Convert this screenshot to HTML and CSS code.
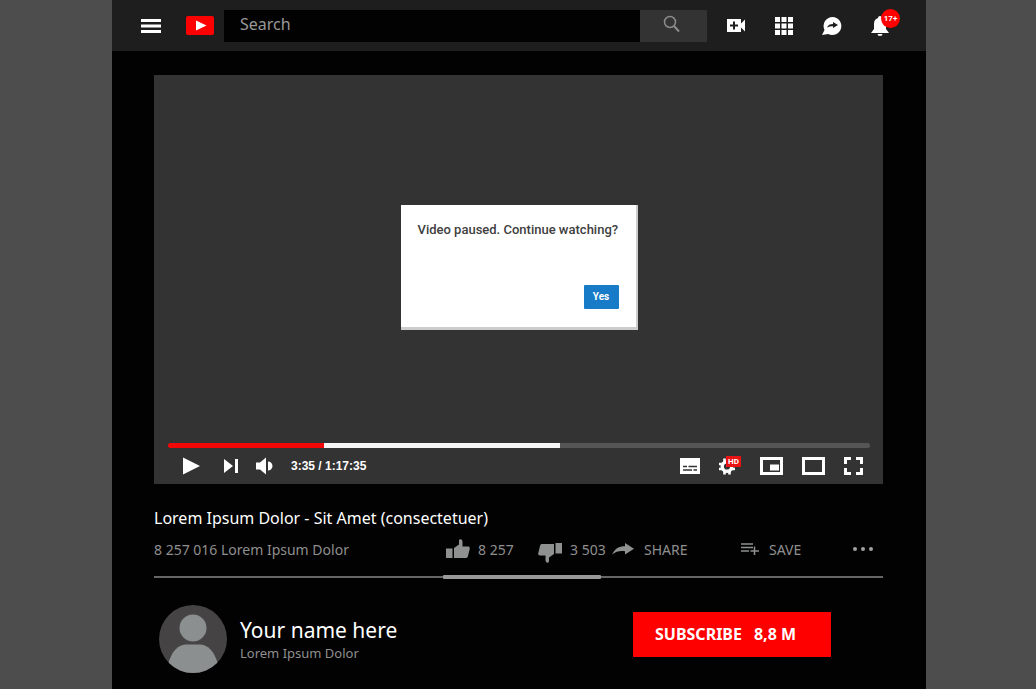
FILE: index.html
```html
<!DOCTYPE html>
<html lang="en">
<head>
  <meta charset="UTF-8">
  <meta name="viewport" content="width=device-width, initial-scale=1.0">
  <title>Lorem Ipsum Dolor</title>
  <link rel="stylesheet" href="styles.css">
</head>
<body>

<div class="page">
  <header class="topbar">
    <button class="icon-btn menu-btn" aria-label="Menu">
      <svg width="20" height="14" viewBox="0 0 20 14" fill="#fff"><path d="M0 0h20v3H0zM0 5.500h20v3H0zM0 11h20v3H0z"/></svg>
    </button>
    <a href="#" class="logo" aria-label="Home">
      <svg width="28" height="19" viewBox="0 0 28 19"><rect width="28" height="19" rx="2" fill="#f00"/><path d="M10 4.500v10l10.500-5z" fill="#fff"/></svg>
    </a>
    <form class="search">
      <input type="text" class="search-input" placeholder="Search" aria-label="Search">
      <button type="submit" class="search-btn" aria-label="Submit search">
        <svg width="18" height="18" viewBox="0 0 18 18" fill="none" stroke="#8c8c8c"><circle cx="7" cy="7" r="5.500" stroke-width="1.500"/><path d="M11 11l5 5.500" stroke-width="2"/></svg>
      </button>
    </form>
    <nav class="top-icons">
      <button class="icon-btn" aria-label="Create">
        <svg width="20" height="16" viewBox="0 0 20 16"><path d="M1 1h14v4.500l4-4v12l-4-4V14H1z" fill="#fff"/><path d="M8 3.500v8M4 7.500h8" stroke="#1e1e1e" stroke-width="2"/></svg>
      </button>
      <button class="icon-btn" aria-label="Apps">
        <svg width="18" height="18" viewBox="0 0 18 18" fill="#fff"><path d="M0 0h5v5H0zM6.500 0h5v5h-5zM13 0h5v5h-5zM0 6.500h5v5H0zM6.500 6.500h5v5h-5zM13 6.500h5v5h-5zM0 13h5v5H0zM6.500 13h5v5h-5zM13 13h5v5h-5z"/></svg>
      </button>
      <button class="icon-btn" aria-label="Messages">
        <svg width="20" height="20" viewBox="0 0 20 20"><path d="M10.500 1a9 9 0 1 1-4.300 17L0 19l2.500-5A9 9 0 0 1 10.500 1z" fill="#fff"/><path d="M5 11.500c1-2.500 3-3.500 6-3.500V6l5 3-5 3v-1.800c-2 0-4 .2-6 1.300z" fill="#1e1e1e"/></svg>
      </button>
      <button class="icon-btn" aria-label="Notifications">
        <svg width="18" height="20" viewBox="0 0 18 20" fill="#fff"><path d="M9 0a2 2 0 0 1 2 2c3 1 4 3 4 6v5l3 4H0l3-4V8c0-3 1-5 4-6a2 2 0 0 1 2-2zM6.500 18h5a2.500 2 0 0 1-5 0z"/></svg>
        <span class="badge">17+</span>
      </button>
    </nav>
  </header>

  <main class="content">
    <section class="player">
      <div class="screen">
        <div class="dialog" role="dialog" aria-labelledby="dialog-text">
          <p id="dialog-text">Video paused. Continue watching?</p>
          <button class="yes-btn">Yes</button>
        </div>
      </div>
      <input type="range" class="seek" min="0" max="4655" value="215" aria-label="Seek" style="--played: 22.2%; --loaded: 55.8%">
      <div class="controls">
        <div class="controls-left">
          <button class="icon-btn" aria-label="Play">
            <svg width="17" height="18" viewBox="0 0 17 18" fill="#fff"><path d="M0 0.500v17L17 9z"/></svg>
          </button>
          <button class="icon-btn next-btn" aria-label="Next">
            <svg width="14" height="14" viewBox="0 0 14 14" fill="#fff"><path d="M0 0v14l9-7zM11 0h3v14h-3z"/></svg>
          </button>
          <button class="icon-btn" aria-label="Mute">
            <svg width="17" height="18" viewBox="0 0 17 18" fill="#fff"><path d="M0 5.500h4L10 0.500v17L4 12.500H0zM12 4.500c2.500 0 4.500 2 4.500 4.500s-2 4.500-4.500 4.500z"/></svg>
          </button>
          <span class="time">3:35 / 1:17:35</span>
        </div>
        <div class="controls-right">
          <button class="icon-btn" aria-label="Subtitles">
            <svg width="20" height="16" viewBox="0 0 20 16"><path d="M0 0h20v16H0z" fill="#fff"/><path d="M3 8.500h4M8.500 8.500h8.500M3 12h9M13.500 12h3.500" stroke="#333" stroke-width="1.500"/></svg>
          </button>
          <button class="icon-btn gear-btn" aria-label="Settings">
            <svg width="16" height="17" viewBox="0 0 16 17"><circle cx="8" cy="8.500" r="4.800" fill="none" stroke="#fff" stroke-width="3.400"/><path d="M5.500 0.500v4M10.500 0.500v4M5.500 12.500v4M10.500 12.500v4M0 6h4M0 11h4M12 6h4M12 11h4" stroke="#fff" stroke-width="2.600"/></svg>
            <span class="hd">HD</span>
          </button>
          <button class="icon-btn" aria-label="Mini player">
            <svg width="23" height="18" viewBox="0 0 23 18"><path d="M1.500 1.500h20v15h-20z" fill="none" stroke="#fff" stroke-width="3"/><path d="M10 7.500h9v6h-9z" fill="#fff"/></svg>
          </button>
          <button class="icon-btn" aria-label="Theater mode">
            <svg width="23" height="18" viewBox="0 0 23 18"><path d="M1.500 1.500h20v15h-20z" fill="none" stroke="#fff" stroke-width="3"/></svg>
          </button>
          <button class="icon-btn" aria-label="Full screen">
            <svg width="19" height="18" viewBox="0 0 19 18" fill="none" stroke="#fff" stroke-width="3"><path d="M1.500 7V1.500H7M12 1.500h5.500V7M17.500 11v5.500H12M7 16.500H1.500V11"/></svg>
          </button>
        </div>
      </div>
    </section>

    <h1 class="title">Lorem Ipsum Dolor - Sit Amet (consectetuer)</h1>

    <div class="stats">
      <span class="views">8 257 016 Lorem Ipsum Dolor</span>
      <button class="action">
        <svg width="24" height="20" viewBox="0 0 24 20" fill="#8f9191"><path d="M0 9.500h6.500V19H0zM8 9l5-3.500V1.500C13 0 16.500-.5 16.500 3v4.500H22c1.500 0 2 1 1.700 2.500L22 17c-.4 1.500-1 2-2.500 2H8z"/></svg>
        8 257
      </button>
      <button class="action">
        <svg class="dislike" width="24" height="20" viewBox="0 0 24 20" fill="#8f9191"><path d="M24 10.500h-6.500V0H24zM16 11l-5 3.500V18c0 2.500-3.500 2.500-3.500-1v-4.500H2C.5 12.500 0 11.500.3 10L2 3c.4-1.500 1-2 2.500-2H16z"/></svg>
        3 503
      </button>
      <button class="action share">
        <svg width="22" height="12" viewBox="0 0 22 12" fill="#8f9191"><path d="M0 11.500C3 5.500 7 3.300 13 3.300V0l9 5.800-9 5.700V8.300C8 7.500 4 8.500 0 11.500z"/></svg>
        SHARE
      </button>
      <button class="action share">
        <svg width="18" height="14" viewBox="0 0 18 14" fill="none" stroke="#8f9191" stroke-width="1.500"><path d="M0 2h12M0 5.500h12M0 9h8M13.500 4.500V13M9.500 9H18"/></svg>
        SAVE
      </button>
      <button class="action" aria-label="More">
        <svg width="20" height="4" viewBox="0 0 20 4" fill="#a0a0a0"><circle cx="2" cy="2" r="2"/><circle cx="10" cy="2" r="2"/><circle cx="18" cy="2" r="2"/></svg>
      </button>
    </div>

    <div class="divider"><div class="rating"></div></div>

    <section class="channel">
      <svg class="avatar" width="68" height="68" viewBox="0 0 68 68">
        <defs><clipPath id="round"><circle cx="34" cy="34" r="34"/></clipPath></defs>
        <g clip-path="url(#round)">
          <path d="M0 0h68v68H0z" fill="#454344"/>
          <circle cx="34" cy="23" r="13.500" fill="#8b8f90"/>
          <path d="M9 60C12 46 20 39.500 27 39.500h14C48 39.500 56 46 59 60v8H9z" fill="#8b8f90"/>
        </g>
      </svg>
      <div class="channel-info">
        <h2>Your name here</h2>
        <p>Lorem Ipsum Dolor</p>
      </div>
      <button class="subscribe"><span>SUBSCRIBE</span><span>8,8 M</span></button>
    </section>
  </main>
</div>

</body>
</html>
```
FILE: styles.css
```css
* {
  box-sizing: border-box;
}
body {
  margin: 0;
  padding: 0 110px 0 112px;
  background-color: #4d4d4d;
  font-family: "Noto Sans", sans-serif;
}
button {
  font-family: inherit;
  border: none;
  padding: 0;
  cursor: pointer;
}
svg {
  display: block;
  flex-shrink: 0;
}
.page {
  min-height: 100vh;
  background-color: #020202;
}
.icon-btn {
  background: none;
  position: relative;
}

/* top bar */
.topbar {
  display: flex;
  align-items: center;
  height: 51px;
  padding: 0 37px 0 29px;
  background-color: #1e1e1e;
}
.menu-btn {
  margin-right: 25px;
}
.logo {
  margin-right: 10px;
}
.search {
  display: flex;
  flex: 1;
  height: 32px;
  margin: 0;
}
.search-input {
  flex: 1;
  min-width: 0;
  padding: 0 16px 3px;
  border: none;
  background-color: #020202;
  color: #999;
  font-family: "Noto Sans", sans-serif;
  font-size: 16px;
}
.search-input::placeholder {
  color: #999;
}
.search-btn {
  display: flex;
  align-items: center;
  justify-content: center;
  width: 67px;
  padding: 0 4px 4px 0;
  background-color: #333;
}
.top-icons {
  display: flex;
  align-items: center;
  gap: 29px;
  margin-left: 19px;
}
.badge {
  position: absolute;
  top: -7px;
  left: 10px;
  width: 19px;
  height: 19px;
  border-radius: 50%;
  background-color: #f00;
  color: #fff;
  font: bold 8px/19px Roboto, sans-serif;
}

/* player */
.content {
  padding: 24px 43px 0 42px;
}
.player {
  display: flex;
  flex-direction: column;
  aspect-ratio: 729 / 409;
  padding: 0 13px 0 14px;
  background-color: #333;
}
.screen {
  display: flex;
  flex: 1;
  align-items: center;
  justify-content: center;
  padding-top: 16px;
}
.dialog {
  display: flex;
  flex-direction: column;
  justify-content: space-between;
  width: 237px;
  height: 125px;
  padding: 16px 17px 18px;
  border-right: 2px solid #ccc;
  border-bottom: 3px solid #ccc;
  background-color: #fff;
  font-family: Roboto, sans-serif;
}
.dialog p {
  margin: 0;
  color: #404040;
  font-size: 13px;
  font-weight: 500;
  line-height: 18px;
  white-space: nowrap;
}
.yes-btn {
  align-self: flex-end;
  width: 35px;
  height: 24px;
  border-radius: 1px;
  background-color: #187bc8;
  color: #fff;
  font-size: 10px;
  font-weight: bold;
}
.seek {
  appearance: none;
  width: 100%;
  height: 5px;
  margin: 0;
  border-radius: 3px;
  background: linear-gradient(to right, #f10707 var(--played), #f5f5f5 var(--played) var(--loaded), #555 var(--loaded));
}
.seek::-webkit-slider-thumb {
  appearance: none;
  width: 0;
  height: 0;
}
.controls {
  display: flex;
  align-items: center;
  justify-content: space-between;
  height: 36px;
  padding: 0 7px 0 15px;
}
.controls-left,
.controls-right {
  display: flex;
  align-items: center;
}
.controls-left {
  gap: 18px;
}
.next-btn {
  margin-left: 6px;
}
.controls-right {
  gap: 19px;
}
.time {
  color: #fff;
  font: bold 12px "Liberation Sans", Arial, sans-serif;
}
.gear-btn {
  width: 22px;
}
.hd {
  position: absolute;
  top: -2px;
  left: 7px;
  width: 15px;
  height: 11px;
  background-color: #e81313;
  color: #fff;
  font: bold 8px/12px Roboto, sans-serif;
}

/* video details */
.title {
  margin: 22px 0 0;
  color: #fff;
  font-size: 16px;
  font-weight: normal;
  line-height: 24px;
}
.stats {
  display: grid;
  grid-template-columns: 292fr 92fr 74fr 129fr 112fr 30fr;
  align-items: center;
  height: 38px;
  color: #8f8f8f;
  font-size: 14px;
  white-space: nowrap;
}
.action {
  display: flex;
  align-items: center;
  gap: 8px;
  min-width: 0;
  background: none;
  color: inherit;
  font-size: 14px;
}
.share {
  gap: 10px;
}
.dislike {
  margin-top: 8px;
}
.divider {
  display: flex;
  align-items: center;
  height: 4px;
  margin-top: 7px;
  background: linear-gradient(#666, #666) center / 100% 2px no-repeat;
}
.rating {
  width: 21.6%;
  height: 4px;
  margin-left: 39.7%;
  border-radius: 1px;
  background-color: #999;
}

/* channel */
.channel {
  display: flex;
  align-items: center;
  margin-top: 26px;
  padding: 0 52px 0 5px;
}
.channel-info {
  flex: 1;
  margin-left: 13px;
  padding-top: 2px;
}
.channel-info h2 {
  margin: 0;
  color: #fff;
  font-size: 21px;
  font-weight: normal;
  line-height: 26px;
}
.channel-info p {
  margin: 0;
  color: #8f8f8f;
  font-size: 13px;
  line-height: 20px;
}
.subscribe {
  display: flex;
  align-items: center;
  gap: 12px;
  width: 198px;
  height: 45px;
  margin-bottom: 10px;
  padding: 0 22px;
  background-color: #f00;
  color: #fff;
  font-size: 16px;
  font-weight: bold;
}
```
